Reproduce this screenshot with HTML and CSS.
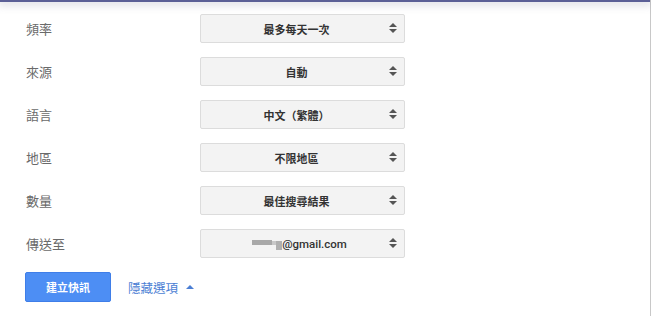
FILE: index.html
```html
<!DOCTYPE html>
<html>
<head>
<meta charset="utf-8">
<link rel="stylesheet" href="styles.css">
</head>
<body>
<div class="page">
  <div class="topbar"></div>
  <div class="form">
    <div class="row"><div class="label">頻率</div><div class="select"><span class="val">最多每天一次</span><span class="arrows"></span></div></div>
    <div class="row"><div class="label">來源</div><div class="select"><span class="val">自動</span><span class="arrows"></span></div></div>
    <div class="row"><div class="label">語言</div><div class="select"><span class="val">中文（繁體）</span><span class="arrows"></span></div></div>
    <div class="row"><div class="label">地區</div><div class="select"><span class="val">不限地區</span><span class="arrows"></span></div></div>
    <div class="row"><div class="label">數量</div><div class="select"><span class="val">最佳搜尋結果</span><span class="arrows"></span></div></div>
    <div class="row"><div class="label">傳送至</div><div class="select"><span class="val"><span class="blur"><i class="b1"></i><i class="b2"></i><i class="b3"></i></span><span class="mail">@gmail.com</span></span><span class="arrows"></span></div></div>
    <div class="actions">
      <button class="create">建立快訊</button>
      <a class="toggle">隱藏選項 <span class="tri"></span></a>
    </div>
  </div>
</div>
</body>
</html>
```
FILE: styles.css
```css
html, body { margin: 0; padding: 0; background: #fff; }
body { font-family: "Noto Sans CJK TC", "Liberation Sans", sans-serif; width: 651px; height: 316px; overflow: hidden; }
.page { position: relative; width: 650px; height: 316px; border-right: 1px solid #c8c8c8; }
.topbar { height: 2px; background: #5b5f96; box-shadow: 0 1px 9px 2px rgba(120,120,150,0.3); }
.form { padding: 12px 0 0 25px; }
.row { display: flex; align-items: center; height: 29px; margin-bottom: 14px; }
.label { width: 175px; box-sizing: border-box; font-size: 13px; color: #6a6a6a; padding-left: 1px; }
.select { width: 203px; height: 27px; border: 1px solid #dcdcdc; border-radius: 2px; background: #f3f3f3; display: flex; align-items: center; position: relative; }
.val { flex: 1; text-align: center; font-size: 11px; font-weight: bold; color: #333; padding-left: 8px; display: flex; justify-content: center; align-items: center; }
.mail { font-family: Roboto, "Liberation Sans", sans-serif; font-weight: 500; font-size: 11.5px; color: #333; }
.blur { display: inline-flex; align-items: center; height: 14px; margin-left: 6px; }
.blur i { display: inline-block; }
.b1 { width: 20px; height: 5px; background: #a8a8a8; margin-top: -2px; }
.b2 { width: 4px; height: 4px; background: #c8c8c8; margin-top: -2px; }
.b3 { width: 6px; height: 9px; background: #b0b0b0; margin-top: 4px; }
.arrows { width: 20px; height: 27px; position: relative; }
.arrows::before, .arrows::after { content: ""; position: absolute; left: 5px; border-left: 4px solid transparent; border-right: 4px solid transparent; }
.arrows::before { top: 8px; border-bottom: 4px solid #555; }
.arrows::after { top: 14px; border-top: 4px solid #555; }
.actions { display: flex; align-items: center; margin-top: 1px; }
.create { width: 86px; height: 30px; border: 1px solid #3f7ee8; border-radius: 2px; background: #4d8ef4; color: #fff; font-family: inherit; font-size: 11px; font-weight: bold; padding: 0; }
.toggle { margin-left: 17px; font-size: 12.5px; color: #4b7ed4; display: flex; align-items: center; }
.tri { display: inline-block; margin-left: 8px; border-left: 4px solid transparent; border-right: 4px solid transparent; border-bottom: 4px solid #4b7ed4; }
```
